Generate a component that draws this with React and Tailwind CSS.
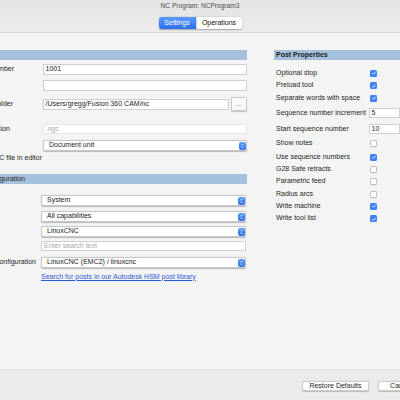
import React from "react";

const Stepper = () => (
  <span className="absolute right-[0.5px] top-[0.5px] bottom-[0.5px] w-[7px] rounded-[2px] bg-gradient-to-b from-[#5c9cfb] to-[#2a6ef0] flex items-center justify-center">
    <svg viewBox="0 0 6 10" className="w-[5px] h-[8px]">
      <path d="M1.6 4 L3 2.6 L4.4 4" stroke="white" strokeWidth="0.9" fill="none" />
      <path d="M1.6 6 L3 7.4 L4.4 6" stroke="white" strokeWidth="0.9" fill="none" />
    </svg>
  </span>
);

const Select = ({ children }) => (
  <div className="relative flex-1 h-full bg-white rounded-[2px] border-[0.5px] border-[#c8c8c8] shadow-[0_0.5px_1px_rgba(0,0,0,0.25)] flex items-center pl-[5px] text-[#1c1c1c]">
    {children}
    <Stepper />
  </div>
);

const Input = ({ children, className = "" }) => (
  <div className={"flex-1 h-full bg-white border-[0.5px] border-[#cfcfcf] flex items-center pl-[1.5px] whitespace-nowrap overflow-hidden " + className}>
    {children}
  </div>
);

const Check = ({ on }) =>
  on ? (
    <span className="w-[7px] h-[7px] rounded-[1.5px] bg-[#3c83f7] flex items-center justify-center shrink-0">
      <svg viewBox="0 0 8 8" className="w-[6px] h-[6px]">
        <path d="M1.7 4.3 L3.2 5.8 L6.3 2.2" stroke="white" strokeWidth="1.1" fill="none" />
      </svg>
    </span>
  ) : (
    <span className="block w-[7px] h-[7px] rounded-[1.5px] bg-white border-[0.5px] border-[#bdbdbd] shadow-[0_0.5px_0.5px_rgba(0,0,0,0.1)] shrink-0" />
  );

const props = [
  { label: "Optional stop", on: true, h: "h-[12px]", mt: "mt-[7px]" },
  { label: "Preload tool", on: true, h: "h-[13px]" },
  { label: "Separate words with space", on: true, h: "h-[12px]" },
  { label: "Sequence number increment", value: "5", h: "h-[18px]" },
  { label: "Start sequence number", value: "10", h: "h-[14px]" },
  { label: "Show notes", on: false, h: "h-[15px]" },
  { label: "Use sequence numbers", on: true, h: "h-[12px]" },
  { label: "G28 Safe retracts", on: false, h: "h-[12px]" },
  { label: "Parametric feed", on: false, h: "h-[13px]" },
  { label: "Radius arcs", on: false, h: "h-[12px]" },
  { label: "Write machine", on: true, h: "h-[12px]" },
  { label: "Write tool list", on: true, h: "h-[13px]" },
];

export default function App() {
  return (
    <div className="w-[400px] h-[400px] overflow-hidden flex flex-col bg-[#f4f4f4] font-['Liberation_Sans',Arial,sans-serif] text-[7px] text-[#1e1e1e]">
      {/* Title + toolbar */}
      <div className="h-[33px] shrink-0 bg-gradient-to-b from-[#e4e4e4] to-[#ececec] border-b border-[#dadada] flex flex-col">
        <div className="h-[11px] flex items-center justify-center text-[6.6px] text-[#4b4b4b]">NC Program: NCProgram3</div>
        <div className="flex justify-center pt-[6px]">
          <div className="flex h-[12px] rounded-[2.5px] shadow-[0_0.5px_1.5px_rgba(0,0,0,0.3)] overflow-hidden">
            <div className="w-[37px] bg-gradient-to-b from-[#5b9afa] to-[#2d6ff0] text-white flex items-center justify-center">Settings</div>
            <div className="w-[46px] bg-white text-[#111] flex items-center justify-center border-l-[0.5px] border-[#d0d0d0]">Operations</div>
          </div>
        </div>
      </div>

      {/* Main */}
      <div className="flex-1 flex">
        {/* Left panel */}
        <div className="w-[247px] shrink-0 flex flex-col pt-[17px]">
          <div className="h-[10px] bg-[#a5c0dc]" />

          <div className="flex items-center h-[11px] mt-[4px]">
            <div className="w-[43px] shrink-0"><div className="w-[14px] flex justify-end whitespace-nowrap">Name/number</div></div>
            <Input>1001</Input>
          </div>
          <div className="flex items-center h-[11px] mt-[5px]">
            <div className="w-[43px] shrink-0" />
            <Input></Input>
          </div>
          <div className="flex items-center h-[14px] mt-[6px]">
            <div className="w-[43px] shrink-0"><div className="w-[13px] flex justify-end whitespace-nowrap">Output folder</div></div>
            <div className="flex-1 h-[11px] flex">
              <Input>/Users/gregg/Fusion 360 CAM/nc</Input>
            </div>
            <div className="w-[16px] h-[14px] ml-[2px] bg-[#f8f8f8] border-[0.5px] border-[#c9c9c9] rounded-[1.5px] shadow-[0_0.5px_1px_rgba(0,0,0,0.2)] flex items-end justify-center pb-[3px] text-[6px] leading-none">...</div>
          </div>
          <div className="flex items-center h-[10px] mt-[13px]">
            <div className="w-[43px] shrink-0"><div className="w-[10px] flex justify-end whitespace-nowrap">NC extension</div></div>
            <Input className="bg-[#fbfbfb] border-[#e6e6e6] text-[#a8a8a8]">.ngc</Input>
          </div>
          <div className="flex items-center h-[11px] mt-[6px]">
            <div className="w-[43px] shrink-0" />
            <Select>Document unit</Select>
          </div>
          <div className="flex items-center h-[10px] mt-[2px]">
            <div className="w-[42px] flex justify-end whitespace-nowrap">Open NC file in editor</div>
          </div>

          <div className="h-[10px] bg-[#a5c0dc] flex items-center mt-[11px]">
            <div className="w-[25px] flex justify-end whitespace-nowrap">Post Configuration</div>
          </div>

          <div className="flex items-center h-[11px] mt-[11px] pr-[1px]">
            <div className="w-[41px] shrink-0" />
            <Select>System</Select>
          </div>
          <div className="flex items-center h-[11px] mt-[5px] pr-[1px]">
            <div className="w-[41px] shrink-0" />
            <Select>All capabilities</Select>
          </div>
          <div className="flex items-center h-[11px] mt-[4px] pr-[1px]">
            <div className="w-[41px] shrink-0" />
            <Select>LinuxCNC</Select>
          </div>
          <div className="flex items-center h-[10px] mt-[4px] pr-[1px]">
            <div className="w-[41px] shrink-0" />
            <Input className="border-[#b3c3ec] text-[#a9a9a9] pl-[2px]">Enter search text</Input>
          </div>
          <div className="flex items-center h-[11px] mt-[6px] pr-[1px]">
            <div className="w-[41px] shrink-0"><div className="w-[36px] flex justify-end whitespace-nowrap">Post configuration</div></div>
            <Select>LinuxCNC (EMC2) / linuxcnc</Select>
          </div>
          <div className="flex items-center h-[10px] mt-[4px]">
            <div className="w-[41px] shrink-0" />
            <span className="text-[#2a58d6] underline whitespace-nowrap">Search for posts in our Autodesk HSM post library</span>
          </div>
        </div>

        {/* Right panel */}
        <div className="flex-1 ml-[27px] pt-[17px] flex flex-col">
          <div className="h-[10px] bg-[#a5c0dc] flex items-center pl-[2px] font-bold text-[#222] whitespace-nowrap">Post Properties</div>
          {props.map((p, i) => (
            <div key={i} className={"flex items-center " + p.h + " " + (p.mt || "")}>
              <div className="w-[95px] shrink-0 pl-[2px] whitespace-nowrap">{p.label}</div>
              {p.value !== undefined ? (
                <div className="flex-1 h-[10px] flex"><Input>{p.value}</Input></div>
              ) : (
                <div className="pl-[1px]"><Check on={p.on} /></div>
              )}
            </div>
          ))}
        </div>
      </div>

      {/* Footer */}
      <div className="h-[31px] shrink-0 bg-[#ebebeb] border-t border-[#dedede] flex items-start pt-[11px] pl-[302px] gap-[9px]">
        <div className="w-[67px] h-[10px] shrink-0 bg-white border-[0.5px] border-[#cccccc] rounded-[2px] shadow-[0_0.5px_1px_rgba(0,0,0,0.2)] flex items-center justify-center whitespace-nowrap">Restore Defaults</div>
        <div className="w-[46px] h-[10px] shrink-0 bg-white border-[0.5px] border-[#cccccc] rounded-[2px] shadow-[0_0.5px_1px_rgba(0,0,0,0.2)] flex items-center justify-center">Cancel</div>
      </div>
    </div>
  );
}
